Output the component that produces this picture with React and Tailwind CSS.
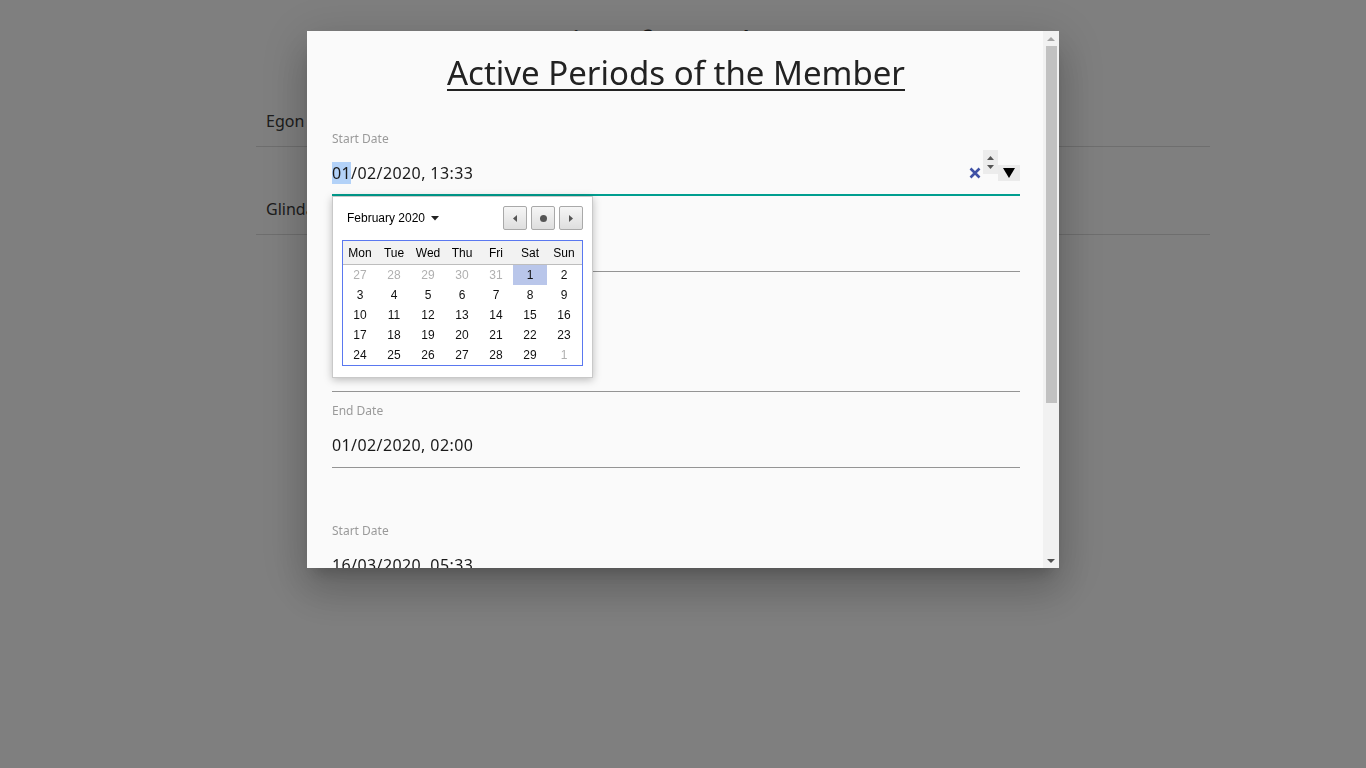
const MEMBERS = ['Egon Spengler', 'Glinda Southgood'];

const PERIODS = [
  { start: '01/02/2020, 13:33', end: '02/02/2020, 18:00' },
  { start: '10/02/2020, 09:15', end: '01/02/2020, 02:00' },
  { start: '16/03/2020, 05:33', end: '20/03/2020, 17:45' },
];

const WEEKS = [
  [[27, 1], [28, 1], [29, 1], [30, 1], [31, 1], [1, 0], [2, 0]],
  [[3, 0], [4, 0], [5, 0], [6, 0], [7, 0], [8, 0], [9, 0]],
  [[10, 0], [11, 0], [12, 0], [13, 0], [14, 0], [15, 0], [16, 0]],
  [[17, 0], [18, 0], [19, 0], [20, 0], [21, 0], [22, 0], [23, 0]],
  [[24, 0], [25, 0], [26, 0], [27, 0], [28, 0], [29, 0], [1, 1]],
];

const DAYS = ['Mon', 'Tue', 'Wed', 'Thu', 'Fri', 'Sat', 'Sun'];

function NavButton({ children }) {
  return (
    <button
      type="button"
      className="w-[24px] h-[24px] flex items-center justify-center rounded-[2px] border border-[#a9a9a9] bg-gradient-to-b from-[#f6f6f6] to-[#dedede]"
    >
      {children}
    </button>
  );
}

function Calendar() {
  return (
    <div className="absolute left-0 top-full z-10 w-[261px] bg-white border border-[#c9c9c9] shadow-[0_2px_8px_rgba(0,0,0,0.25)] pt-[9px] px-[9px] pb-[11px] font-['Liberation_Sans',Arial,sans-serif]">
      <div className="flex items-center h-[24px]">
        <div className="flex items-center pl-[5px] text-[12px] text-black">
          February 2020
          <svg className="ml-[6px]" width="8" height="5" viewBox="0 0 8 5"><path d="M0 0h8L4 4.5z" fill="#222" /></svg>
        </div>
        <div className="ml-auto flex gap-[4px]">
          <NavButton>
            <svg width="4" height="7" viewBox="0 0 4 7"><path d="M4 0v7L0 3.5z" fill="#555" /></svg>
          </NavButton>
          <NavButton>
            <span className="w-[7px] h-[7px] rounded-full bg-[#555]"></span>
          </NavButton>
          <NavButton>
            <svg width="4" height="7" viewBox="0 0 4 7"><path d="M0 0v7l4-3.5z" fill="#555" /></svg>
          </NavButton>
        </div>
      </div>
      <div className="mt-[10px] border border-[#5a78f0]">
        <div className="grid grid-cols-[repeat(7,34px)] h-[24px] bg-[#f2f2f2] border-b border-[#bdbdbd] text-[12px] text-black">
          {DAYS.map(d => (
            <div key={d} className="flex items-center justify-center">{d}</div>
          ))}
        </div>
        {WEEKS.map((w, i) => (
          <div key={i} className="grid grid-cols-[repeat(7,34px)] h-[20px] text-[12px]">
            {w.map(([n, other], j) => (
              <div
                key={j}
                className={
                  'flex items-center justify-center ' +
                  (other ? 'text-[#b0b0b0] ' : 'text-[#111] ') +
                  (i === 0 && j === 5 ? 'bg-[#b9c6ea]' : '')
                }
              >
                {n}
              </div>
            ))}
          </div>
        ))}
      </div>
    </div>
  );
}

function FocusedField({ label, value }) {
  return (
    <div className="relative mt-[11px]">
      <div className="text-[12px] leading-4 text-[#9a9a9a]">{label}</div>
      <div className="flex items-start pt-[3px] pb-[9px] border-b-2 border-[#009e8f]">
        <span className="mt-[11px] text-[16px] leading-6 tracking-[0.4px] text-[#1a1a1a]">
          <span className="bg-[#b3d2f8]">{value.slice(0, 2)}</span>{value.slice(2)}
        </span>
        <div className="ml-auto flex items-start">
          <svg className="mt-[17px] mr-[2px]" width="12" height="12" viewBox="0 0 12 12">
            <path d="M1.5 1.5l9 9M10.5 1.5l-9 9" stroke="#3f51a5" strokeWidth="2.6" />
          </svg>
          <div className="w-[15px] h-[24px] bg-[#ececec] flex flex-col items-center justify-center gap-[5px]">
            <svg width="7" height="4" viewBox="0 0 7 4"><path d="M0 4h7L3.5 0z" fill="#555" /></svg>
            <svg width="7" height="4" viewBox="0 0 7 4"><path d="M0 0h7L3.5 4z" fill="#555" /></svg>
          </div>
          <div className="mt-[15px] w-[22px] h-[16px] bg-[#ebebeb] flex items-center justify-center">
            <svg width="12" height="10" viewBox="0 0 12 10"><path d="M0 0h12L6 10z" fill="#000" /></svg>
          </div>
        </div>
      </div>
      <Calendar />
    </div>
  );
}

function Field({ label, value }) {
  return (
    <div className="mt-[11px]">
      <div className="text-[12px] leading-4 text-[#9a9a9a]">{label}</div>
      <div className="pt-[14px] pb-[10px] border-b border-[#949494]">
        <span className="text-[16px] leading-6 tracking-[0.4px] text-[#1a1a1a]">{value}</span>
      </div>
    </div>
  );
}

function Scrollbar() {
  return (
    <div className="w-[16px] shrink-0 bg-[#f1f1f1] flex flex-col items-center">
      <div className="h-[15px] flex items-center justify-center">
        <svg width="8" height="4" viewBox="0 0 8 4"><path d="M0 4h8L4 0z" fill="#a3a3a3" /></svg>
      </div>
      <div className="w-[11px] h-[357px] bg-[#c1c1c1]"></div>
      <div className="mt-auto h-[15px] flex items-center justify-center">
        <svg width="8" height="4" viewBox="0 0 8 4"><path d="M0 0h8L4 4z" fill="#505050" /></svg>
      </div>
    </div>
  );
}

export default function App() {
  return (
    <div className="min-h-screen bg-white font-['Noto_Sans',sans-serif]">
      {/* page behind the dialog */}
      <h1 className="pt-[21px] h-[59px] text-center text-[34px] leading-[44px] text-[#333]">List of members</h1>
      <div className="ml-[256px] w-[954px]">
        {MEMBERS.map(m => (
          <div key={m} className="pt-[50px] pb-[13px] pl-[10px] border-b border-[#dcdcdc] text-[16px] leading-6 text-[#3a3a3a]">
            {m}
          </div>
        ))}
      </div>

      {/* dialog */}
      <div className="fixed inset-0 bg-black/50 flex justify-center items-start pt-[31px]">
        <div className="w-[752px] h-[537px] flex bg-[#fafafa] shadow-[0_11px_15px_-7px_rgba(0,0,0,0.2),0_24px_38px_3px_rgba(0,0,0,0.14),0_9px_46px_8px_rgba(0,0,0,0.12)]">
          <div className="flex-1 overflow-hidden pl-[25px] pr-[23px] pt-[20px]">
            <h2 className="text-center text-[33px] leading-[44px] text-[#222] underline underline-offset-[4px] decoration-2">
              Active Periods of the Member
            </h2>
            <div className="mt-[36px]">
              {PERIODS.map((p, i) => (
                <div key={i} className={i === 0 ? '' : 'mt-[55px]'}>
                  {i === 0 ? (
                    <FocusedField label="Start Date" value={p.start} />
                  ) : (
                    <Field label="Start Date" value={p.start} />
                  )}
                  <Field label="End Date" value={p.end} />
                </div>
              ))}
            </div>
            <div className="mt-[48px] mb-[56px] flex justify-end gap-3">
              <button type="button" className="h-[36px] px-4 rounded text-[14px] uppercase text-[#009688]">Add period</button>
              <button type="button" className="h-[36px] px-4 rounded text-[14px] uppercase bg-[#009688] text-white">Save</button>
            </div>
          </div>
          <Scrollbar />
        </div>
      </div>
    </div>
  );
}
